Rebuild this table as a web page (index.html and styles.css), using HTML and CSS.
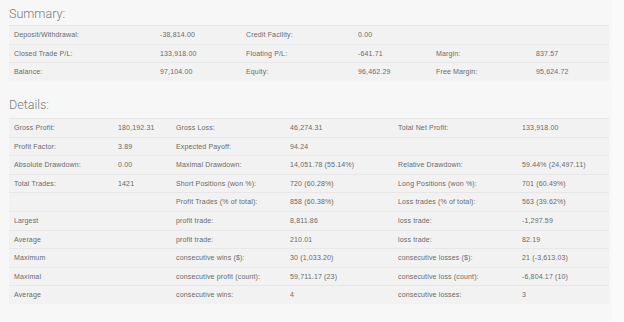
FILE: index.html
```html
<!DOCTYPE html>
<html>
<head>
<meta charset="utf-8">
<link rel="stylesheet" href="styles.css">
</head>
<body>
<div class="panel">
  <h2 class="title">Summary:</h2>
  <table class="grid summary">
    <colgroup>
      <col class="s1"><col class="s2"><col class="s3"><col class="s4"><col class="s5"><col class="s6">
    </colgroup>
    <tr><td>Deposit/Withdrawal:</td><td>-38,814.00</td><td>Credit Facility:</td><td>0.00</td><td></td><td></td></tr>
    <tr><td>Closed Trade P/L:</td><td>133,918.00</td><td>Floating P/L:</td><td>-641.71</td><td>Margin:</td><td>837.57</td></tr>
    <tr><td>Balance:</td><td>97,104.00</td><td>Equity:</td><td>96,462.29</td><td>Free Margin:</td><td>95,624.72</td></tr>
  </table>

  <h2 class="title details-title">Details:</h2>
  <table class="grid details">
    <colgroup>
      <col class="d1"><col class="d2"><col class="d3"><col class="d4"><col class="d5"><col class="d6">
    </colgroup>
    <tr><td>Gross Profit:</td><td>180,192.31</td><td>Gross Loss:</td><td>46,274.31</td><td>Total Net Profit:</td><td>133,918.00</td></tr>
    <tr><td>Profit Factor:</td><td>3.89</td><td>Expected Payoff:</td><td>94.24</td><td></td><td></td></tr>
    <tr><td>Absolute Drawdown:</td><td>0.00</td><td>Maximal Drawdown:</td><td>14,051.78 (55.14%)</td><td>Relative Drawdown:</td><td>59.44% (24,497.11)</td></tr>
    <tr><td>Total Trades:</td><td>1421</td><td>Short Positions (won %):</td><td>720 (60.28%)</td><td>Long Positions (won %):</td><td>701 (60.49%)</td></tr>
    <tr><td></td><td></td><td>Profit Trades (% of total):</td><td>858 (60.38%)</td><td>Loss trades (% of total):</td><td>563 (39.62%)</td></tr>
    <tr><td>Largest</td><td></td><td>profit trade:</td><td>8,811.86</td><td>loss trade:</td><td>-1,297.59</td></tr>
    <tr><td>Average</td><td></td><td>profit trade:</td><td>210.01</td><td>loss trade:</td><td>82.19</td></tr>
    <tr><td>Maximum</td><td></td><td>consecutive wins ($):</td><td>30 (1,033.20)</td><td>consecutive losses ($):</td><td>21 (-3,613.03)</td></tr>
    <tr><td>Maximal</td><td></td><td>consecutive profit (count):</td><td>59,711.17 (23)</td><td>consecutive loss (count):</td><td>-6,804.17 (10)</td></tr>
    <tr><td>Average</td><td></td><td>consecutive wins:</td><td>4</td><td>consecutive losses:</td><td>3</td></tr>
  </table>
</div>
</body>
</html>
```

FILE: styles.css
```css
html, body {
  margin: 0;
  padding: 0;
  background: #fafafa;
  height: 100%;
}

.panel {
  box-sizing: border-box;
  width: 612px;
  min-height: 322px;
  padding: 7px 3px 0 9px;
  background: #f7f7f7;
}

.title {
  margin: 0 0 4px 0;
  font-family: Roboto, "Liberation Sans", sans-serif;
  font-weight: 300;
  font-size: 12.5px;
  line-height: 14px;
  color: #7a7a7a;
}

.details-title {
  margin-top: 17px;
  margin-bottom: 6px;
}

.grid {
  width: 600px;
  border-collapse: collapse;
  table-layout: fixed;
  font-family: "Liberation Sans", Arial, sans-serif;
  font-size: 7px;
  letter-spacing: 0.15px;
  color: #6a6a6a;
  background: #f2f2f2;
}

.grid td {
  padding: 0 0 0 5px;
  line-height: 17.6px;
  height: 17.6px;
  border-top: 1px solid #e7e7e7;
  white-space: nowrap;
  overflow: hidden;
}

.summary td {
  line-height: 17.7px;
  height: 17.7px;
}

.s1 { width: 146px; }
.s2 { width: 86px; }
.s3 { width: 112px; }
.s4 { width: 78px; }
.s5 { width: 100px; }
.s6 { width: 78px; }

.d1 { width: 104px; }
.d2 { width: 58px; }
.d3 { width: 114px; }
.d4 { width: 108px; }
.d5 { width: 124px; }
.d6 { width: 92px; }
```
